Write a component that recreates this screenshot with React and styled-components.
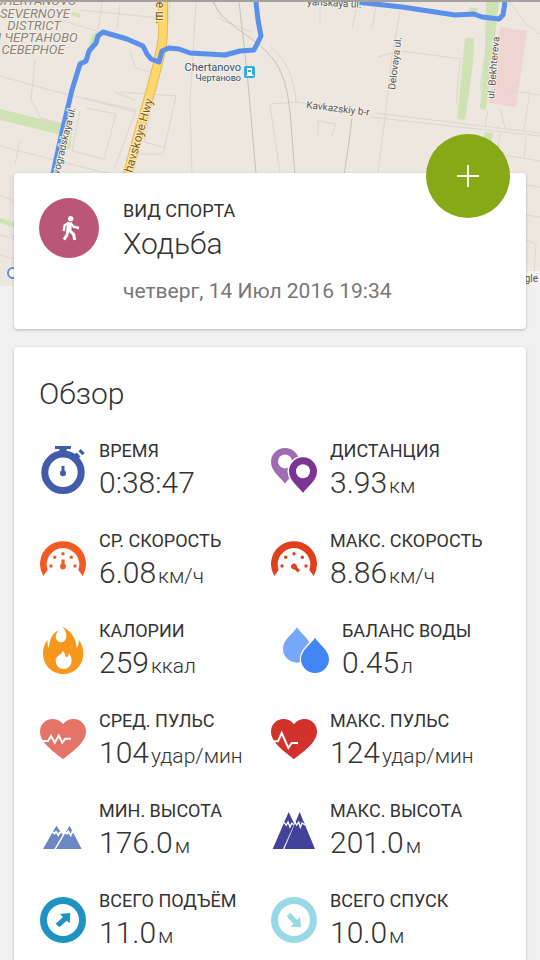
import React from "react";
import styled, { createGlobalStyle } from "styled-components";

const GlobalStyle = createGlobalStyle`
  * {
    box-sizing: border-box;
  }
  body {
    margin: 0;
    background-color: #f1f1f1;
    color: #333;
    font-family: Roboto, "Noto Sans", sans-serif;
  }
`;

const Page = styled.main`
  display: flex;
  flex-direction: column;
  min-height: 100vh;
`;

const MapBox = styled.div`
  height: 286px;
  border-top: 2px solid #a3a09d;
  background-color: #ede7e0;
`;

const MapSvg = styled.svg`
  display: block;
  width: 100%;
  height: 100%;
  font-family: Roboto, "Noto Sans", sans-serif;
`;

const Card = styled.section`
  position: relative;
  margin: 0 14px;
  padding: 25px;
  border-radius: 4px;
  background-color: #fff;
  box-shadow: 0 1px 3px rgba(0, 0, 0, 0.25);
`;

const SportCard = styled(Card)`
  display: flex;
  gap: 24px;
  margin-top: -113px;
  margin-bottom: 18px;
`;

const OverviewCard = styled(Card)`
  flex: 1;
  padding-bottom: 8px;
  border-radius: 4px 4px 0 0;
`;

const SportBadge = styled.div`
  display: flex;
  flex: none;
  width: 60px;
  height: 60px;
  border-radius: 50%;
  background-color: #bb5679;
`;

const AddButton = styled.button`
  position: absolute;
  top: -39px;
  right: 16px;
  display: flex;
  align-items: center;
  justify-content: center;
  width: 84px;
  height: 84px;
  padding: 0;
  border: 0;
  border-radius: 50%;
  background-color: #87a915;
  cursor: pointer;
`;

const Label = styled.div`
  font-size: 18px;
  line-height: 26px;
  white-space: nowrap;
`;

const Value = styled.div`
  font-size: 30px;
  font-weight: 300;
  line-height: 38px;
  white-space: nowrap;
`;

const Unit = styled.span`
  margin-left: 2px;
  font-size: 21px;
  line-height: 1;
`;

const SportName = styled.h1`
  margin: 0;
  font-size: 30px;
  font-weight: 300;
  line-height: 40px;
`;

const SportDate = styled.time`
  display: block;
  margin-top: 14px;
  color: #777;
  font-size: 21px;
  line-height: 26px;
`;

const Title = styled.h2`
  margin: 0 0 22px;
  font-size: 30px;
  font-weight: 300;
  line-height: 44px;
`;

const Stats = styled.div`
  display: grid;
  grid-template-columns: 1fr 1fr;
  row-gap: 26px;
`;

const Stat = styled.div`
  display: flex;
  align-items: center;
  gap: 12px;
  padding-left: ${(props) => (props.$inset ? "12px" : "0")};
`;

const Icon = styled.svg`
  flex: none;
  width: 48px;
  height: 48px;
`;

function StopwatchIcon() {
  return (
    <Icon viewBox="0 0 48 48" fill="#405cab">
      <circle cx="24" cy="26.3" r="18.2" fill="none" stroke="#405cab" strokeWidth="7" />
      <path d="M16 0h16v3h-4.300v3h-7.400v-3H16z" />
      <path d="M34.500 9.500l3-3 4 4-3 3z" />
      <path d="M39.500 5.300l2.200-2.200 4 4-2.200 2.200z" />
      <path d="M22.500 20h3v7h-3z" />
      <circle cx="24" cy="27.300" r="3" />
    </Icon>
  );
}

function PinsIcon() {
  const pin = "M0-14a14 14 0 0 0-14 14c0 9 8 14 14 21.500c6-7.500 14-12.500 14-21.500a14 14 0 0 0-14-14z";
  return (
    <Icon viewBox="0 0 48 48">
      <g transform="translate(15 16)">
        <path d={pin} fill="#a16bb3" />
        <circle r="7" cy="-.6" fill="#fff" />
      </g>
      <g transform="translate(33 25.300)">
        <path d={pin} fill="#7b3493" stroke="#fff" strokeWidth="3" paintOrder="stroke" />
        <circle r="7" fill="#fff" />
      </g>
    </Icon>
  );
}

function GaugeIcon({ color, angle = 0 }) {
  return (
    <Icon viewBox="0 0 48 48" fill={color}>
      <path d="M4.300 40A23 23 0 1 1 43.700 40L39.300 34A16.300 16.300 0 1 0 8.700 34z" />
      <circle cx="12" cy="30" r="1.700" />
      <circle cx="15.700" cy="21.300" r="1.700" />
      <circle cx="24" cy="17.700" r="1.700" />
      <circle cx="32.300" cy="21.300" r="1.700" />
      <circle cx="36" cy="30" r="1.700" />
      <g transform={`rotate(${angle} 24 30.500)`}>
        <circle cx="24" cy="30.500" r="2.900" />
        <path d="M22.400 23.500h3.200v7h-3.200z" />
      </g>
    </Icon>
  );
}

function FlameIcon() {
  return (
    <Icon viewBox="57 318 144 144">
      <path
        fill="#f7981d"
        d="M127 320C150 330 168 350 170 384C175 378 177 368 176 359C186 370 190 385 190 402A60.500 60 0 0 1 69 402C69 385 73 370 83 359C82 369 83 378 87 384C88 358 98 338 117 330C108 340 105 350 109 358C115 370 132 370 137 358C142 344 138 331 127 320z"
      />
      <path
        fill="#fff"
        d="M127 393C138 398 132 408 139 411C144 412 147 407 146 400C152 407 155 414 155 423A24 24 0 0 1 107 423C107 412 113 410 118 405C122 402 127 399 127 393z"
      />
    </Icon>
  );
}

function DropsIcon() {
  const drop = "M0-64C-10-46-42-28-42 0A42 42 0 0 0 42 0C42-28 10-46 0-64z";
  return (
    <Icon viewBox="66 78 144 144">
      <path d={drop} transform="translate(111 146)" fill="#76a7f8" />
      <path
        d={drop}
        transform="translate(165 177)"
        fill="#4285f4"
        stroke="#fff"
        strokeWidth="8"
        paintOrder="stroke"
      />
    </Icon>
  );
}

function HeartIcon({ color, pulse }) {
  return (
    <Icon viewBox="0 0 48 48">
      <path
        fill={color}
        d="M24 43.300C17 37 1 27.500 1 15.500C1 8.500 6.500 3 13.500 3C18 3 22 5.200 24 8.300C26 5.200 30 3 34.500 3C41.500 3 47 8.500 47 15.500C47 27.500 31 37 24 43.300z"
      />
      <polyline points={pulse} fill="none" stroke="#fff" strokeWidth="2" />
    </Icon>
  );
}

function LowMountainsIcon() {
  return (
    <Icon viewBox="57 348 144 144">
      <path fill="#6d87c3" d="M109 407L69 477H103L128 434z" />
      <path fill="#6d87c3" d="M149 407L108 477H185z" />
      <path
        fill="none"
        stroke="#fff"
        strokeWidth="5"
        d="M95 423l8 8 5-6 7 11 4-9 5 1M134 426l7 5 4-7 7 12 5-11 7 3"
      />
    </Icon>
  );
}

function HighMountainsIcon() {
  return (
    <Icon viewBox="30 78 144 144">
      <path fill="#42429b" d="M86 96L38 207H69L103 132z" />
      <path fill="#42429b" d="M119 96L73 207H165z" />
      <path
        fill="none"
        stroke="#fff"
        strokeWidth="4"
        d="M72 127l7 9 5-10 6 15 5-11 6 4M103 124l7 11 6-9 5 16 5-13 9 6"
      />
    </Icon>
  );
}

function ArrowIcon({ color, angle = 0 }) {
  return (
    <Icon viewBox="-72 -72 144 144" fill={color}>
      <circle r="58.500" fill="none" stroke={color} strokeWidth="21" />
      <path
        transform={`rotate(${angle})`}
        d="M22-21L20 10L11 2L-11 22L-22 11L0-9L-9-18z"
      />
    </Icon>
  );
}

function WalkIcon() {
  return (
    <svg width="60" height="60" viewBox="117 99 180 180" fill="none" stroke="#fff">
      <circle cx="212" cy="161" r="8" fill="#fff" stroke="none" />
      <path strokeWidth="15" d="M209 172L206 199" />
      <path strokeWidth="7" d="M207 173L194 181L191 198M212 175L221 185L237 189" />
      <path strokeWidth="9" d="M204 195L201 210L192 224M207 195L221 208L224 225" />
    </svg>
  );
}

function TrackMap() {
  return (
    <MapBox>
      <MapSvg viewBox="0 2 540 284" preserveAspectRatio="xMidYMin slice" role="img" aria-label="Chertanovo">
        {/* parks and blocks */}
        <g fill="#cfe2b3">
          <path d="M0 109L62 124L61 135L0 120z" />
          <path d="M92 34l12-4 22 6-2 4-22-5-9 14-4-1z" />
          <path d="M72 12l8 2v4l-9-3z" />
          <path d="M62 128l10 3-2 19-6-3z" />
          <path d="M0 218l14 4v5l-14-4z" />
          <path d="M465 38h9l-1 25-7 52-2 5-7-1 2-20z" />
          <path d="M486 2h13l-13 108-6-1 5-57z" />
          <path d="M470 7l8 2-3 6-6-3zM485 132l8 1-2 12-8-2z" />
        </g>
        <path d="M500 27L527 31L516 107L489 103z" fill="#efd4d2" />
        {/* minor streets */}
        <g fill="none" stroke="#dcd6cf" strokeWidth="1">
          <path d="M0 76l50 14 40 10 45 12M0 146l50 13 60 15M40 2l20 18 40 12M35 60l-4 40 10 18 22 6" />
          <path d="M84 98l52 12-22 60M86 108l30 6-12 45-32-8 8-40M120 92l56 4-13 58-28 0M130 50l5 18 16 4M115 92l20 8M150 114l-6 28 22 6" />
          <path d="M170 2l-3 28M196 2l-6 100 2 71M102 2l-4 28M120 4l-3 25M80 10l80 8M20 140l-5 24M10 175l0 60 25 10" />
          <path d="M0 195l14 6M0 235l14 4M0 255l14 4M526 185l14 2M526 215l14 2M526 240l10 4-2 32" />
          <path d="M320 2v20M358 2l-6 26M376 5l-4 24M214 2l8 18 30 12" />
          <path d="M270 45c14 14 24 30 26 57l60 8M298 102l-28 2M270 104l10 69M318 120v16M318 121l18 3-5 13" />
          <path d="M400 12l-8 45-7 60-7 56M378 57l22-6 62 8M460 60l-4 45M490 20l-10 70M488 110l-3 16M500 108l5 20M530 90l-6 40M510 2l16 22 14 10M505 90l35 5" />
          <path d="M375 113l165 20M370 117l170 19M500 134l-3 20 43 7M526 137l-2 22" />
        </g>
        <g fill="none" stroke="#c4c0bb" strokeWidth="1">
          <path d="M212 0c14 30 44 34 64 63c16 26 14 60 19 111" />
          <path d="M239 2l8 70 9 101M352 119l-4 30-4 26" />
        </g>
        {/* highway */}
        <path
          d="M163 0v32c0 25-20 80-37 150"
          fill="none"
          stroke="#e5b95b"
          strokeWidth="10"
        />
        <path
          d="M163 0v32c0 25-20 80-37 150"
          fill="none"
          stroke="#fbd76c"
          strokeWidth="8"
        />
        <g fill="none" stroke="#5a8fea" strokeWidth="5" strokeLinejoin="round">
          <path d="M52 178L62 132L72 90L80 64L86 61L89 51L96 43L98 36L103 32L127 39L143 46L147 54L151 59L159 62L162 51L169 48L179 49L190 53L225 55L240 51L254 50L261 36L258 20L256 2" />
          <path d="M356 2L402 7L455 15L474 14L482 17L499 19L503 15L505 2" />
          <circle cx="13" cy="273" r="5" strokeWidth="2" fill="#fff" />
        </g>
        <g
          fill="#8d8373"
          stroke="#f3eee8"
          strokeWidth="2"
          paintOrder="stroke"
          fontSize="13"
          fontStyle="italic"
          textAnchor="middle"
        >
          <text x="36" y="5">CHERTANOVO</text>
          <text x="35" y="18">SEVERNOYE</text>
          <text x="34" y="30">DISTRICT</text>
          <text x="35" y="42">Н ЧЕРТАНОВО</text>
          <text x="33" y="54">СЕВЕРНОЕ</text>
        </g>
        <g fill="#33576f" stroke="#f3eee8" strokeWidth="2" paintOrder="stroke" textAnchor="end">
          <text x="241" y="71" fontSize="11">Chertanovo</text>
          <text x="241" y="81" fontSize="9">Чертаново</text>
        </g>
        <rect x="244" y="66" width="11" height="12" rx="2" fill="#35a9dd" />
        <path d="M247 68h5v6h-5zM246 76l2-2h4l2 2z" fill="#fff" />
        <path d="M248 70h3v2h-3z" fill="#35a9dd" />
        <g fill="#555" stroke="#f5f1ec" strokeWidth="2" paintOrder="stroke" fontSize="10">
          <text transform="translate(306 108) rotate(7)">Kavkazskiy b-r</text>
          <text transform="translate(395 90) rotate(-83)">Delovaya ul.</text>
          <text transform="translate(494 99) rotate(-85)">ul. Bekhtereva</text>
          <text transform="translate(307 5) rotate(3)">yanskaya ul.</text>
          <text transform="translate(59 175) rotate(-76)">vogradskaya ul.</text>
        </g>
        <g fill="#7a5a2c" stroke="#fdebb5" strokeWidth="2" paintOrder="stroke" fontSize="12">
          <text transform="translate(132 173) rotate(-74)">havskoye Hwy</text>
          <text transform="translate(156 -5) rotate(90)">oe ш.</text>
        </g>
        <path d="M470 271H540V286H470z" fill="#f5f2ef" />
        <text x="538" y="282" fontSize="10" fill="#555" textAnchor="end">
          Google
        </text>
      </MapSvg>
    </MapBox>
  );
}

const stats = [
  { label: "ВРЕМЯ", value: "0:38:47", icon: <StopwatchIcon /> },
  { label: "ДИСТАНЦИЯ", value: "3.93", unit: "км", icon: <PinsIcon /> },
  { label: "СР. СКОРОСТЬ", value: "6.08", unit: "км/ч", icon: <GaugeIcon color="#f15a24" /> },
  {
    label: "МАКС. СКОРОСТЬ",
    value: "8.86",
    unit: "км/ч",
    icon: <GaugeIcon color="#e1401d" angle={135} />,
  },
  { label: "КАЛОРИИ", value: "259", unit: "ккал", icon: <FlameIcon /> },
  { label: "БАЛАНС ВОДЫ", value: "0.45", unit: "л", icon: <DropsIcon />, inset: true },
  {
    label: "СРЕД. ПУЛЬС",
    value: "104",
    unit: "удар/мин",
    icon: (
      <HeartIcon color="#e57368" pulse="3,25 9,25 12,20 15.700,26.700 19.700,19.700 23.300,26.700 26.300,22.700 32,22.700" />
    ),
  },
  {
    label: "МАКС. ПУЛЬС",
    value: "124",
    unit: "удар/мин",
    icon: <HeartIcon color="#d3312c" pulse="2,25.300 8,25.300 11.700,17 18.300,32 21.700,27 28,27" />,
  },
  { label: "МИН. ВЫСОТА", value: "176.0", unit: "м", icon: <LowMountainsIcon /> },
  { label: "МАКС. ВЫСОТА", value: "201.0", unit: "м", icon: <HighMountainsIcon /> },
  { label: "ВСЕГО ПОДЪЁМ", value: "11.0", unit: "м", icon: <ArrowIcon color="#1e92c0" /> },
  { label: "ВСЕГО СПУСК", value: "10.0", unit: "м", icon: <ArrowIcon color="#98d9e8" angle={90} /> },
];

export default function App() {
  return (
    <Page>
      <GlobalStyle />
      <TrackMap />
      <SportCard>
        <SportBadge>
          <WalkIcon />
        </SportBadge>
        <div>
          <Label>ВИД СПОРТА</Label>
          <SportName>Ходьба</SportName>
          <SportDate dateTime="2016-07-14T19:34">четверг, 14 Июл 2016 19:34</SportDate>
        </div>
        <AddButton type="button" aria-label="Добавить">
          <svg width="22" height="22" viewBox="0 0 22 22" stroke="#fff" strokeWidth="2">
            <path d="M11 0v22M0 11h22" />
          </svg>
        </AddButton>
      </SportCard>
      <OverviewCard>
        <Title>Обзор</Title>
        <Stats>
          {stats.map((stat) => (
            <Stat key={stat.label} $inset={stat.inset}>
              {stat.icon}
              <div>
                <Label>{stat.label}</Label>
                <Value>
                  {stat.value}
                  {stat.unit && <Unit>{stat.unit}</Unit>}
                </Value>
              </div>
            </Stat>
          ))}
        </Stats>
      </OverviewCard>
    </Page>
  );
}
